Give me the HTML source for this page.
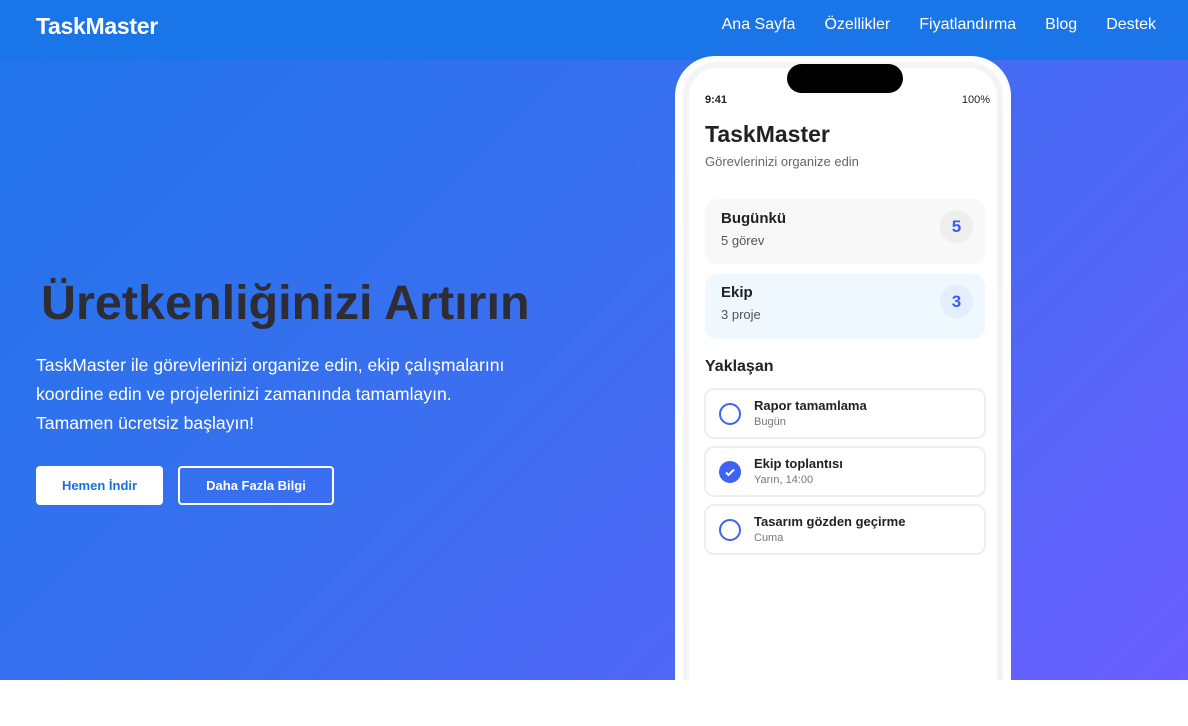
<!DOCTYPE html>
<html><head><meta charset="utf-8"><style>
*{margin:0;padding:0;box-sizing:border-box}
body{width:1188px;height:726px;overflow:hidden;background:#fff;font-family:"Liberation Sans",Arial,sans-serif}
.hero{position:absolute;left:0;top:0;width:1188px;height:680px;background:linear-gradient(135deg,#1f74ea 0%,#3a6ff0 45%,#6a5efd 100%);overflow:hidden}
.nav{position:absolute;left:0;top:0;width:1188px;height:60px;background:#1a75e8}
.logo{position:absolute;left:36px;top:13px;color:#fff;font-weight:bold;font-size:23px;letter-spacing:-0.3px}
.links{position:absolute;right:32px;top:16px;color:#fff;font-size:16px}
.links span{margin-left:29px}
h1{position:absolute;left:41px;top:275px;font-size:48.5px;color:#2d2d33;font-weight:bold}
.p{position:absolute;left:36px;top:351px;color:#fff;font-size:17.6px;line-height:29px}
.b1,.b2{position:absolute;top:466px;height:39px;border-radius:4px;font-size:13px;font-weight:bold;display:flex;align-items:center;justify-content:center}
.b1{left:36px;width:127px;background:#fff;color:#1a6fe0}
.b2{left:178px;width:156px;border:2px solid #fff;color:#fff}
.phone{position:absolute;left:675px;top:56px;width:336px;height:700px;background:#fff;border-radius:40px}
.ring{position:absolute;left:8px;top:6px;right:8px;bottom:0;border:6px solid #f4f4f4;border-radius:34px;border-bottom:none}
.notch{position:absolute;left:112px;top:8px;width:116px;height:29px;background:#000;border-radius:15px}
.s{position:absolute;color:#222}
.card{position:absolute;left:30px;width:280px;height:65px;border-radius:12px}
.num{position:absolute;right:12px;top:11px;width:33px;height:33px;border-radius:50%;display:flex;align-items:center;justify-content:center;color:#3b5bf5;font-weight:bold;font-size:17px}
.task{position:absolute;left:29px;width:282px;height:51px;border:2px solid #eee;border-radius:10px}
.ci{position:absolute;left:13px;top:13px;width:22px;height:22px;border:2px solid #4062f2;border-radius:50%}
.tt{position:absolute;left:48px;top:8px;font-size:13px;font-weight:bold;color:#222}
.ts{position:absolute;left:48px;top:26px;font-size:11px;color:#777}
</style></head><body>
<div class="hero">
<div class="nav"><div class="logo">TaskMaster</div><div class="links"><span>Ana Sayfa</span><span>Özellikler</span><span>Fiyatlandırma</span><span>Blog</span><span>Destek</span></div></div>
<h1>Üretkenliğinizi Artırın</h1>
<div class="p">TaskMaster ile görevlerinizi organize edin, ekip çalışmalarını<br>koordine edin ve projelerinizi zamanında tamamlayın.<br>Tamamen ücretsiz başlayın!</div>
<div class="b1">Hemen İndir</div><div class="b2">Daha Fazla Bilgi</div>
<div class="phone"><div class="ring"></div><div class="notch"></div>
<div class="s" style="left:30px;top:38px;font-size:11px;font-weight:bold">9:41</div>
<div class="s" style="right:21px;top:38px;font-size:11px">100%</div>
<div class="s" style="left:30px;top:65px;font-size:23px;font-weight:bold">TaskMaster</div>
<div class="s" style="left:30px;top:98px;font-size:13px;color:#666">Görevlerinizi organize edin</div>
<div class="card" style="top:143px;background:#f8f8f8"><div class="s" style="left:16px;top:11px;font-size:15px;font-weight:bold">Bugünkü</div><div class="s" style="left:16px;top:34px;font-size:13px;color:#555">5 görev</div><div class="num" style="background:#eee">5</div></div>
<div class="card" style="top:218px;background:#eff7ff"><div class="s" style="left:16px;top:10px;font-size:15px;font-weight:bold">Ekip</div><div class="s" style="left:16px;top:33px;font-size:13px;color:#555">3 proje</div><div class="num" style="background:#e3effd">3</div></div>
<div class="s" style="left:30px;top:302px;font-size:16px;font-weight:bold">Yaklaşan</div>
<div class="task" style="top:332px"><div class="ci"></div><div class="tt">Rapor tamamlama</div><div class="ts">Bugün</div></div>
<div class="task" style="top:390px"><div class="ci" style="background:#4062f2"><svg width="18" height="18" viewBox="0 0 18 18" style="position:absolute;left:0;top:0"><path d="M5 9.5l2.5 2.5L13 6.5" stroke="#fff" stroke-width="2" fill="none"/></svg></div><div class="tt">Ekip toplantısı</div><div class="ts">Yarın, 14:00</div></div>
<div class="task" style="top:448px"><div class="ci"></div><div class="tt">Tasarım gözden geçirme</div><div class="ts">Cuma</div></div>
</div>
</div>
</body></html>
